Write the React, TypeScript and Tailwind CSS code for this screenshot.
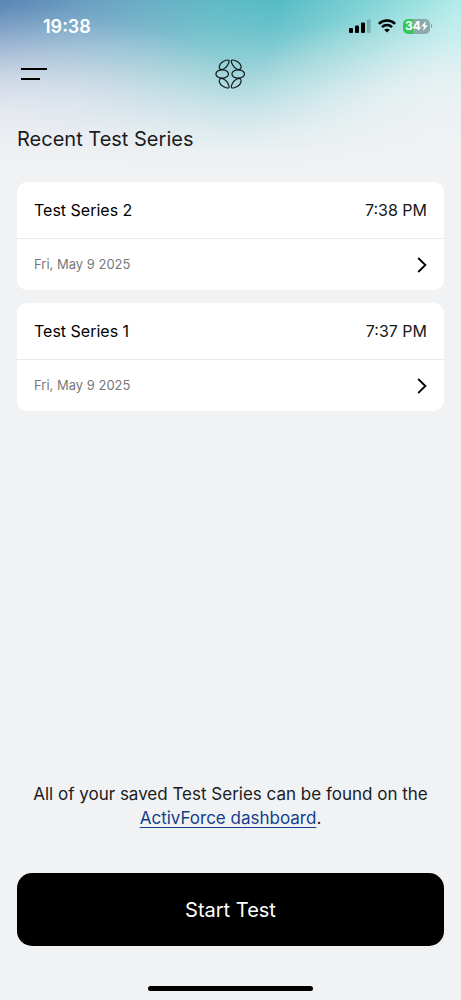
import React from "react";

type Series = { name: string; time: string; date: string };

const series: Series[] = [
  { name: "Test Series 2", time: "7:38 PM", date: "Fri, May 9 2025" },
  { name: "Test Series 1", time: "7:37 PM", date: "Fri, May 9 2025" },
];

function SignalIcon() {
  return (
    <svg width="22" height="14" viewBox="0 0 22 14" aria-hidden="true">
      <rect x="0" y="9" width="4" height="5" rx="1" />
      <rect x="6" y="6.5" width="4" height="7.5" rx="1" />
      <rect x="12" y="3.5" width="4" height="10.5" rx="1" />
      <rect x="17.8" y="0.5" width="3.8" height="13.5" rx="1" fill="#1f4a50" fillOpacity="0.3" />
    </svg>
  );
}

function WifiIcon() {
  return (
    <svg width="18" height="14" viewBox="0 0 18 14" fill="none" stroke="#000" strokeWidth="2.5" aria-hidden="true">
      <path d="M0.9 4.9C5.4 0.4 12.6 0.4 17.1 4.9" />
      <path d="M4 8.2C6.8 5.4 11.2 5.4 14 8.2" />
      <path d="M9 13.6L6.2 10.7C7.8 9.3 10.2 9.3 11.8 10.7Z" fill="#000" stroke="none" />
    </svg>
  );
}

function BatteryIcon() {
  return (
    <div className="flex items-center gap-px">
      <div className="flex h-[15px] w-[27px] items-center justify-center rounded-[5px] bg-[linear-gradient(90deg,#35c759_36%,#8ba9a8_36%)] text-[12px] leading-none font-bold text-white">
        34
        <svg width="7" height="10" viewBox="0 0 7 10" fill="#fff" aria-hidden="true">
          <path d="M4.8 0L0.2 5.6H3L2 10L6.8 4.2H4Z" />
        </svg>
      </div>
      <div className="h-1 w-px rounded-r-sm bg-[#7fa3a3]" />
    </div>
  );
}

function Logo() {
  return (
    <svg width="32" height="30" viewBox="0 0 32 30" fill="none" stroke="#12191b" strokeWidth="1.2" aria-hidden="true">
      <ellipse cx="8.2" cy="15" rx="6.3" ry="4.2" />
      <ellipse cx="24.2" cy="15" rx="6.3" ry="4.2" />
      <path d="M6 10C4.4 8 5.6 4.9 8.4 3C10.7 1.4 14.2 0.4 14.9 1.4C15.6 3 13.7 7 11.2 8.9C9.2 10.5 7.1 11.2 6 10Z" />
      <path d="M26.4 10C28 8 26.8 4.9 24 3C21.7 1.4 18.2 0.4 17.5 1.4C16.8 3 18.7 7 21.2 8.9C23.2 10.5 25.3 11.2 26.4 10Z" />
      <path d="M6 20C4.4 22 5.6 25.1 8.4 27C10.7 28.6 14.2 29.6 14.9 28.6C15.6 27 13.7 23 11.2 21.1C9.2 19.5 7.1 18.8 6 20Z" />
      <path d="M26.4 20C28 22 26.8 25.1 24 27C21.7 28.6 18.2 29.6 17.5 28.6C16.8 27 18.7 23 21.2 21.1C23.2 19.5 25.3 18.8 26.4 20Z" />
    </svg>
  );
}

function SeriesCard({ item }: { item: Series }) {
  return (
    <li>
      <button type="button" className="block w-full rounded-[10px] bg-white text-left text-black">
        <span className="flex h-[57px] items-center justify-between border-b border-[#e9eaec] px-[17px] text-[16px]">
          <span>{item.name}</span>
          <span className="text-[#16181a]">{item.time}</span>
        </span>
        <span className="flex h-[51px] items-center justify-between px-[17px]">
          <span className="text-[13px] text-[#77787b]">{item.date}</span>
          <svg width="10" height="16" viewBox="0 0 10 16" fill="none" stroke="#000" strokeWidth="1.8" aria-hidden="true">
            <path d="M1.2 1L8.4 8L1.2 15" />
          </svg>
        </span>
      </button>
    </li>
  );
}

export default function App() {
  return (
    <div className="flex min-h-screen flex-col bg-[#f1f2f4] bg-[linear-gradient(180deg,rgba(241,242,244,0)_0px,rgba(241,242,244,0.1)_25px,rgba(241,242,244,0.28)_50px,rgba(241,242,244,0.46)_74px,rgba(241,242,244,0.66)_100px,rgba(241,242,244,0.86)_130px,rgba(241,242,244,0.96)_152px,#f1f2f4_178px),radial-gradient(ellipse_250px_110px_at_0px_115px,rgba(238,236,245,0.7)_0%,rgba(238,236,245,0.5)_35%,rgba(238,238,245,0.22)_68%,rgba(238,238,245,0)_100%),radial-gradient(ellipse_240px_120px_at_100%_120px,rgba(241,242,244,0.8)_0%,rgba(241,242,244,0.6)_35%,rgba(241,242,244,0.22)_68%,rgba(241,242,244,0)_100%),linear-gradient(102deg,#5a85b5_0%,#6a9fc2_17%,#6aafc5_30%,#5fbac5_43%,#56bcc5_56%,#78cfd2_71%,#b1ecea_92%)] font-['Inter','Liberation_Sans',sans-serif] text-[#1a1b1e] [background-size:100%_180px] bg-no-repeat">
      <div className="flex h-[52px] items-center justify-between pr-[29px] pl-[43px]">
        <time className="text-[18px] font-semibold text-white">19:38</time>
        <div className="flex items-center gap-[7px]">
          <SignalIcon />
          <WifiIcon />
          <BatteryIcon />
        </div>
      </div>

      <header className="grid h-11 grid-cols-3 items-center px-[17px]">
        <button type="button" aria-label="Menu" className="flex w-9 flex-col gap-2 p-1">
          <span className="h-[2px] w-[26px] bg-black" />
          <span className="h-[2px] w-[19px] bg-black" />
        </button>
        <div className="justify-self-center">
          <Logo />
        </div>
      </header>

      <main className="flex flex-1 flex-col px-[17px] pt-7">
        <h1 className="text-[20px] leading-[30px]">Recent Test Series</h1>
        <ul className="mt-7 flex flex-col gap-[13px]">
          {series.map((item) => (
            <SeriesCard key={item.name} item={item} />
          ))}
        </ul>
        <p className="mt-auto text-center text-[17px] leading-6">
          All of your saved Test Series can be found on the{" "}
          <a href="#dashboard" className="text-[#153e8a] underline underline-offset-[3px]">
            ActivForce dashboard
          </a>
          .
        </p>
        <button type="button" className="mt-[43px] h-[73px] w-full rounded-[15px] bg-black text-[20px] text-white">
          Start Test
        </button>
      </main>

      <div className="mt-10 mb-[9px] h-[5px] w-[165px] self-center rounded-full bg-black" />
    </div>
  );
}
